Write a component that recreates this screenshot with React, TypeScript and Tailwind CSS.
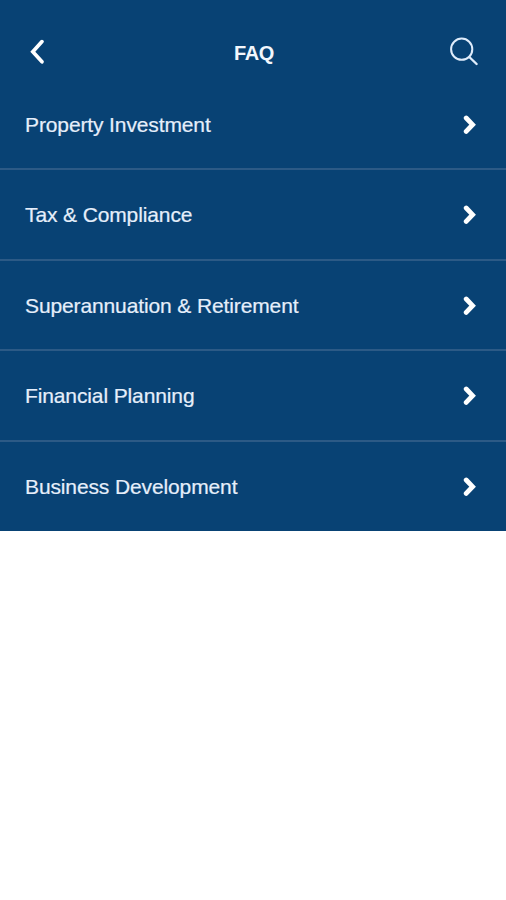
import React from "react";

type TopicType = {
  id: number;
  title: string;
};

const topics: TopicType[] = [
  { id: 1, title: "Property Investment" },
  { id: 2, title: "Tax & Compliance" },
  { id: 3, title: "Superannuation & Retirement" },
  { id: 4, title: "Financial Planning" },
  { id: 5, title: "Business Development" },
];

function BackIcon() {
  return (
    <svg width="16" height="28" viewBox="0 0 16 28" fill="none">
      <path
        d="M13 3.6L3.8 13.8L13 23.8"
        stroke="white"
        strokeWidth="3.7"
        strokeLinecap="round"
      />
    </svg>
  );
}

function SearchIcon() {
  return (
    <svg width="30" height="30" viewBox="0 0 30 30" fill="none">
      <circle cx="12.7" cy="12.2" r="10.6" stroke="#dfecfb" strokeWidth="2" />
      <path
        d="M20.3 20L27.6 27"
        stroke="#dfecfb"
        strokeWidth="2.4"
        strokeLinecap="round"
      />
    </svg>
  );
}

function ArrowIcon() {
  return (
    <svg width="14" height="20" viewBox="0 0 14 20" fill="none">
      <path
        d="M3.2 3L9.6 9.7L3.2 16.4"
        stroke="white"
        strokeWidth="4.8"
        strokeLinecap="round"
      />
    </svg>
  );
}

function TopicRow({ topic }: { topic: TopicType }) {
  return (
    <li className="border-b-2 border-[#2c5a86] last:border-b-0">
      <button
        type="button"
        className="flex h-[88.5px] w-full cursor-pointer items-center justify-between pt-[2px] pr-[29px] pl-[25px] text-left"
      >
        <span className="text-[21px] leading-6 tracking-[-0.12px] text-[#e6effb] [-webkit-text-stroke:0.2px_#e6effb]">
          {topic.title}
        </span>
        <ArrowIcon />
      </button>
    </li>
  );
}

export default function App() {
  return (
    <div className="min-h-screen bg-white font-['Liberation_Sans',Arial,sans-serif]">
      <div className="h-[531px] bg-[#084274]">
        <header className="grid h-[79.5px] grid-cols-3 items-center pt-6 pr-[27px] pl-[29px]">
          <button type="button" aria-label="Back" className="cursor-pointer">
            <BackIcon />
          </button>
          <h1 className="pt-[2px] text-center text-[20px] leading-6 font-bold tracking-[-0.3px] text-[#f2f7fd]">
            FAQ
          </h1>
          <button
            type="button"
            aria-label="Search"
            className="cursor-pointer justify-self-end"
          >
            <SearchIcon />
          </button>
        </header>
        <ul>
          {topics.map((topic) => (
            <TopicRow key={topic.id} topic={topic} />
          ))}
        </ul>
      </div>
    </div>
  );
}
